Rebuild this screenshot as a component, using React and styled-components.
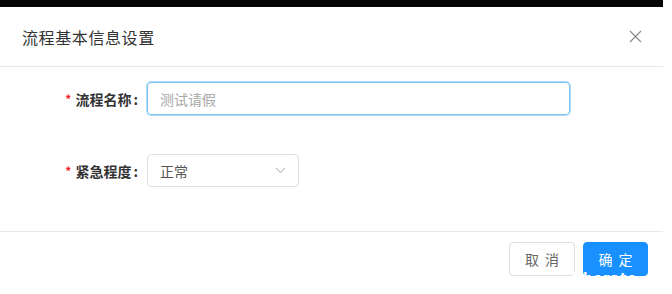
import React from 'react'
import styled, { createGlobalStyle } from 'styled-components'

const GlobalStyle = createGlobalStyle`
	html, body {
		margin: 0;
		padding: 0;
		background: #fff;
	}
	body {
		font-family: "Noto Sans CJK SC", "Noto Sans", sans-serif;
		width: 672px;
		height: 294px;
		overflow: hidden;
	}
`;

const Modal = styled.div`
	width: 663px;
	position: relative;
`;

const TopBar = styled.div`
	height: 7px;
	background: #050505;
`;

const Header = styled.div`
	height: 59px;
	display: flex;
	align-items: center;
	justify-content: space-between;
	padding: 0 22px;
	border-bottom: 1px solid #e8e8e8;
`;

const Title = styled.h3`
	margin: 0;
	font-size: 16px;
	font-weight: 400;
	letter-spacing: 0.6px;
	color: #333;
`;

const CloseButton = styled.button`
	border: 0;
	background: none;
	padding: 0;
	margin-right: -1px;
	width: 14px;
	height: 14px;
	display: flex;
	align-items: center;
	justify-content: center;
	cursor: pointer;
`;

const Body = styled.div`
	padding: 15px 0 44px;
	display: flex;
	flex-direction: column;
	gap: 39px;
`;

const Row = styled.div`
	display: flex;
	align-items: center;
	height: 33px;
`;

const Label = styled.label`
	width: 147px;
	display: flex;
	justify-content: flex-end;
	align-items: center;
	padding-right: 9px;
	box-sizing: border-box;
	font-size: 14px;
	font-weight: 700;
	color: #333;
`;

const Colon = styled.span`
	margin-left: 2px;
`;

const Required = styled.span`
	color: #f5222d;
	font-size: 12px;
	margin-right: 4px;
	font-weight: 700;
`;

const Field = styled.div`
	width: ${props => props.width}px;
	height: 33px;
	box-sizing: border-box;
	border-radius: 4px;
	border: 1px solid ${props => props.focused ? '#7cc2ef' : '#dcdfe6'};
	box-shadow: ${props => props.focused ? '0 0 0 1px rgba(124, 194, 239, 0.6)' : 'none'};
	padding: 0 12px;
	display: flex;
	align-items: center;
	justify-content: space-between;
	font-size: 14px;
	color: ${props => props.placeholder ? '#a8a8a8' : '#555'};
`;

const Footer = styled.div`
	border-top: 1px solid #e8e8e8;
	padding: 10px 15px 0 0;
	display: flex;
	justify-content: flex-end;
	gap: 8px;
`;

const Button = styled.button`
	height: 34px;
	width: ${props => props.primary ? 65 : 66}px;
	border-radius: 4px;
	border: 1px solid ${props => props.primary ? '#1890ff' : '#dcdfe6'};
	background: ${props => props.primary ? '#1890ff' : '#fff'};
	color: ${props => props.primary ? '#fff' : '#666'};
	font-family: "Noto Sans CJK SC", sans-serif;
	font-size: 14px;
	letter-spacing: 6px;
	text-indent: 6px;
	padding: 0;
`;

const Watermark = styled.span`
	position: absolute;
	left: 572px;
	top: 271px;
	line-height: 1;
	font-family: "DejaVu Sans", sans-serif;
	font-size: 13px;
	font-weight: 700;
	letter-spacing: 1px;
	color: #fff;
`;

const CloseIcon = () => (
	<svg width="13" height="13" viewBox="0 0 13 13">
		<path d="M1 1 L12 12 M12 1 L1 12" stroke="#8a8a8a" strokeWidth="1.2" fill="none" />
	</svg>
);

const Chevron = () => (
	<svg width="11" height="7" viewBox="0 0 11 7">
		<path d="M1 1 L5.5 5.5 L10 1" stroke="#c0c4cc" strokeWidth="1.1" fill="none" />
	</svg>
);

export default function App() {
	return (
		<>
			<GlobalStyle />
			<Modal>
				<TopBar />
				<Header>
					<Title>流程基本信息设置</Title>
					<CloseButton><CloseIcon /></CloseButton>
				</Header>
				<Body>
					<Row>
						<Label><Required>*</Required>流程名称<Colon>:</Colon></Label>
						<Field width={423} focused placeholder>测试请假</Field>
					</Row>
					<Row>
						<Label><Required>*</Required>紧急程度<Colon>:</Colon></Label>
						<Field width={152}>
							正常
							<Chevron />
						</Field>
					</Row>
				</Body>
				<Footer>
					<Button>取消</Button>
					<Button primary>确定</Button>
				</Footer>
				<Watermark>liberate</Watermark>
			</Modal>
		</>
	)
}
